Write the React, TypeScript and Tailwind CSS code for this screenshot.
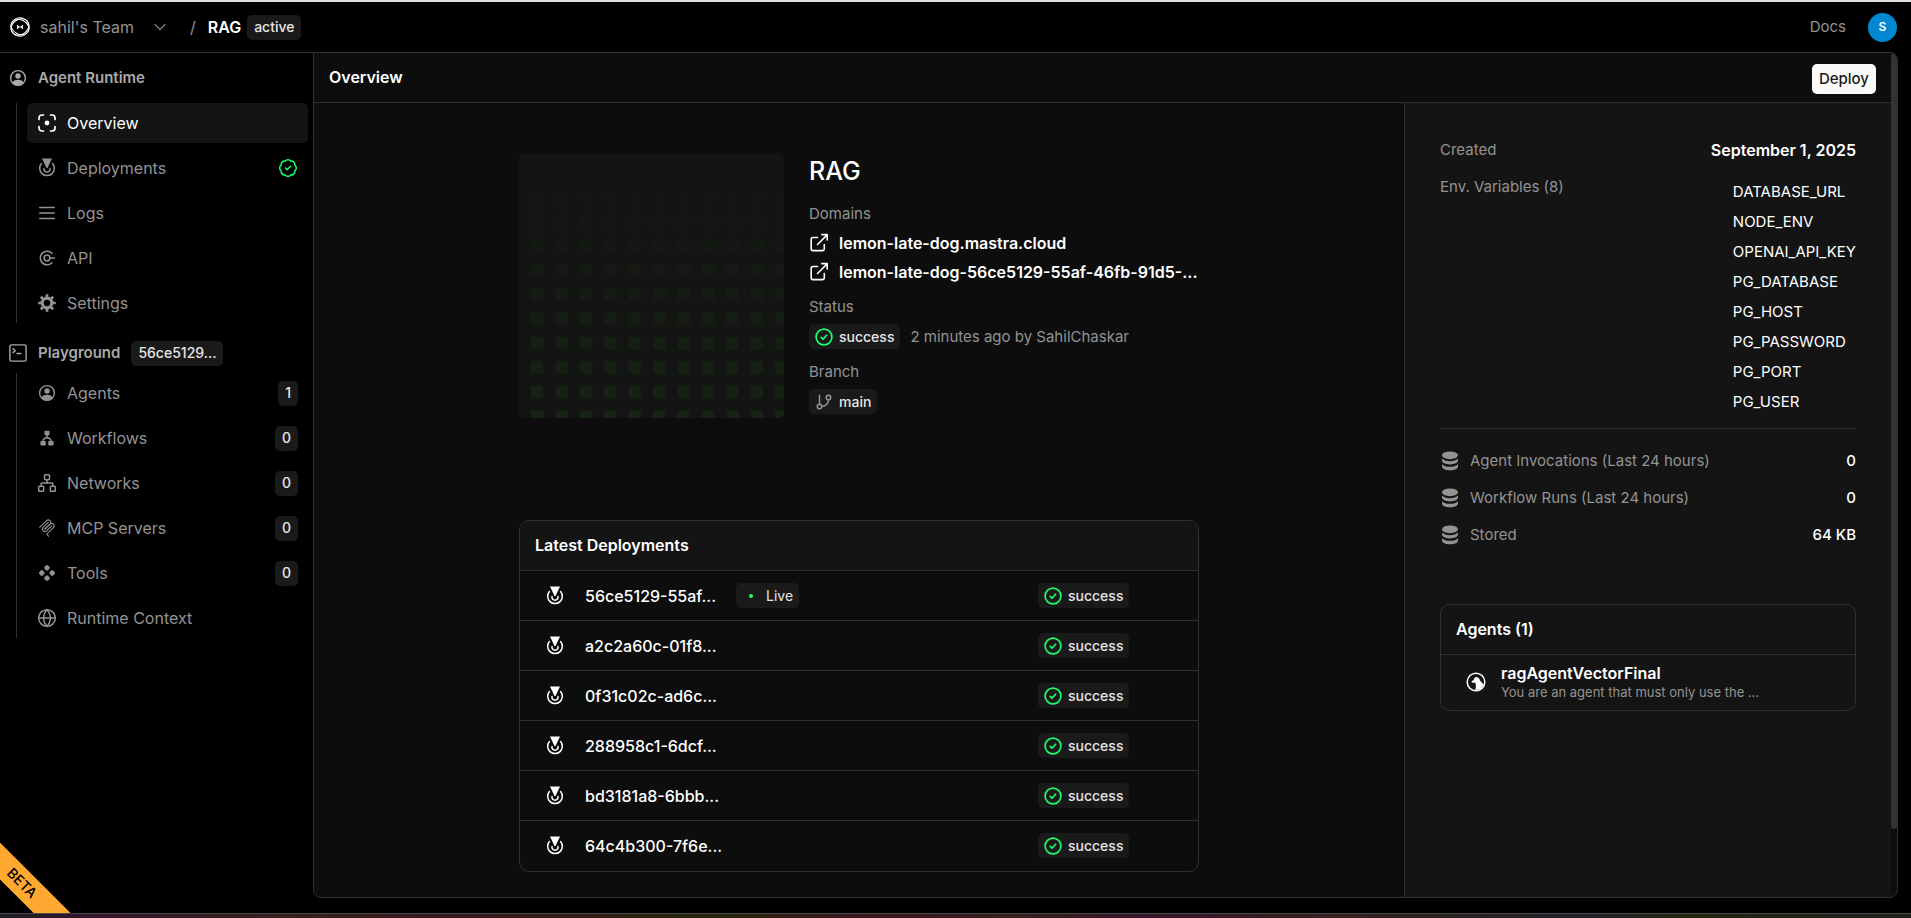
import type { ReactNode } from "react";
import { ChevronDown, Globe, Network, GitBranch, BadgeCheck } from "lucide-react";

type IconProps = { className?: string };

function LogoIcon() {
  return (
    <svg viewBox="0 0 22 22" className="size-[22px] text-white" fill="none" stroke="currentColor" strokeWidth="1">
      <circle cx="11" cy="11" r="9.3" />
      <ellipse cx="11" cy="11" rx="9.4" ry="7.2" transform="rotate(30 11 11)" />
      <ellipse cx="11" cy="11" rx="9.4" ry="7.6" transform="rotate(-35 11 11)" />
      <path d="M8 9.200 9.800 11 8 12.800M14 9.200 12.200 11l1.800 1.800M8 11h6" strokeWidth="1.1" />
    </svg>
  );
}

function AgentIcon({ className }: IconProps) {
  return (
    <svg viewBox="0 0 18 18" className={className} fill="currentColor">
      <circle cx="9" cy="9" r="7.4" fill="none" stroke="currentColor" strokeWidth="1.4" />
      <circle cx="9" cy="7" r="2.7" />
      <path d="M3.2 14C4 11.8 6 10.8 9 10.8s5 1 5.800 3.200C13.500 15.600 11.300 16.600 9 16.600S4.500 15.600 3.200 14Z" />
    </svg>
  );
}

function OverviewIcon({ className }: IconProps) {
  return (
    <svg viewBox="0 0 18 18" className={className} fill="none" stroke="currentColor" strokeWidth="1.7" strokeLinecap="round">
      <path d="M1 5.500V4a3 3 0 0 1 3-3h1.500M12.500 1H14a3 3 0 0 1 3 3v1.500M17 12.500V14a3 3 0 0 1-3 3h-1.500M5.500 17H4a3 3 0 0 1-3-3v-1.500" />
      <circle cx="9" cy="9" r="2.400" fill="currentColor" stroke="none" />
    </svg>
  );
}

function DeploymentIcon({ className }: IconProps) {
  return (
    <svg viewBox="0 0 18 20" className={className} fill="none" stroke="currentColor" strokeWidth="1.500" strokeLinecap="round">
      <path d="M4 0.600h10L9.500 10h-1Z" fill="currentColor" stroke="none" />
      <path d="M3.400 5.600a7.300 7.300 0 1 0 11.200 0" />
      <path d="M6 10.400a3.100 3.100 0 1 0 6 0" />
    </svg>
  );
}

function LogsIcon({ className }: IconProps) {
  return (
    <svg viewBox="0 0 18 18" className={className} fill="none" stroke="currentColor" strokeWidth="1.600" strokeLinecap="round">
      <path d="M1.800 3.500h14.400M1.800 9h14.400M1.800 14.500h14.400" />
    </svg>
  );
}

function ApiIcon({ className }: IconProps) {
  return (
    <svg viewBox="0 0 18 18" className={className} fill="none" stroke="currentColor" strokeWidth="1.500" strokeLinecap="round">
      <path d="M14 4.300a6.800 6.800 0 1 0 0 9.400" />
      <circle cx="9" cy="9" r="2.900" />
      <path d="M12 9h4.500" />
    </svg>
  );
}

function SettingsIcon({ className }: IconProps) {
  return (
    <svg viewBox="0 0 18 18" className={className} fill="none" stroke="currentColor">
      <circle cx="9" cy="9" r="4.800" strokeWidth="3.200" />
      <path d="M9 0.200v3M9 14.800v3M0.200 9h3M14.800 9h3M2.800 2.800l2 2M13.200 13.200l2 2M2.800 15.200l2-2M13.200 4.800l2-2" strokeWidth="2.700" />
    </svg>
  );
}

function TerminalIcon({ className }: IconProps) {
  return (
    <svg viewBox="0 0 18 18" className={className} fill="none" stroke="currentColor" strokeWidth="1.400" strokeLinecap="round" strokeLinejoin="round">
      <rect x="0.900" y="0.900" width="16.200" height="16.200" rx="1.600" />
      <path d="M4 4.800l2.300 1.900L4 8.600M8 9.500h3.800" />
    </svg>
  );
}

function WorkflowIcon({ className }: IconProps) {
  return (
    <svg viewBox="0 0 18 18" className={className} fill="currentColor">
      <rect x="6.500" y="1.800" width="5" height="4.400" rx="0.800" />
      <rect x="2.400" y="12" width="5.400" height="4.400" rx="0.800" />
      <rect x="10.200" y="12" width="5.400" height="4.400" rx="0.800" />
      <path d="M9 6v3M5 12.500c0-2.500 1-3 4-4 3 1 4 1.500 4 4" fill="none" stroke="currentColor" strokeWidth="1.500" />
    </svg>
  );
}

function McpIcon({ className }: IconProps) {
  return (
    <svg viewBox="0 0 180 180" className={className} fill="none" stroke="currentColor" strokeWidth="11" strokeLinecap="round">
      <path d="M18 84.850 85.880 16.970a24 24 0 0 1 33.940 33.940L68.560 102.180" />
      <path d="M69.270 101.470l50.550-50.560a24 24 0 0 1 33.940 0l.36.350a24 24 0 0 1 0 33.940l-61.400 61.400a8 8 0 0 0 0 11.310l12.610 12.610" />
      <path d="M102.850 33.940 52.650 84.150a24 24 0 0 0 33.940 33.940l50.200-50.210" />
    </svg>
  );
}

function ToolsIcon({ className }: IconProps) {
  return (
    <svg viewBox="0 0 18 18" className={className} fill="currentColor">
      <rect x="6.600" y="1.400" width="4.800" height="4.800" rx="1.400" transform="rotate(45 9 3.800)" />
      <rect x="6.600" y="11.800" width="4.800" height="4.800" rx="1.400" transform="rotate(45 9 14.200)" />
      <rect x="1.400" y="6.600" width="4.800" height="4.800" rx="1.400" transform="rotate(45 3.800 9)" />
      <rect x="11.800" y="6.600" width="4.800" height="4.800" rx="1.400" transform="rotate(45 14.200 9)" />
    </svg>
  );
}

function DatabaseIcon() {
  return (
    <svg viewBox="0 0 20 20" className="size-5" fill="currentColor">
      <ellipse cx="10" cy="4.300" rx="8" ry="3.900" />
      <path d="M2 7.600c1.400 1.700 4.400 2.600 8 2.600s6.600-.9 8-2.600v2c0 2.200-3.600 3.800-8 3.800S2 11.800 2 9.600Z" />
      <path d="M2 13.200c1.400 1.700 4.400 2.600 8 2.600s6.600-.9 8-2.600v2.200c0 2.200-3.600 3.900-8 3.900s-8-1.700-8-3.900Z" />
    </svg>
  );
}

function ExternalLinkIcon() {
  return (
    <svg viewBox="0 0 20 20" className="size-5 shrink-0" fill="none" stroke="currentColor" strokeWidth="1.600" strokeLinecap="round" strokeLinejoin="round">
      <path d="M8.500 4.500H4A1.800 1.800 0 0 0 2.200 6.300v9.500A1.800 1.800 0 0 0 4 17.600h9.500a1.800 1.800 0 0 0 1.800-1.800v-4.300" />
      <path d="M8.500 11.500 18 2M12.800 1.600h5.400V7" />
    </svg>
  );
}

function CheckCircleIcon() {
  return (
    <svg viewBox="0 0 18 18" className="size-[18px]" fill="none" stroke="currentColor" strokeWidth="1.700" strokeLinecap="round" strokeLinejoin="round">
      <circle cx="9" cy="9" r="7.900" />
      <path d="M6.200 9.400 8 11.200l3.600-4" />
    </svg>
  );
}

function OpenAiIcon() {
  return (
    <svg viewBox="0 0 20 20" className="size-5" fill="none" stroke="currentColor" strokeWidth="1.500">
      <circle cx="10" cy="10" r="8.800" />
      <path d="M5.300 9.900C6 8.800 6.800 8.500 7.700 8c.3-2 1.600-3.200 3.400-2.800 1.800.4 2.700 1.700 2.900 3.400l3.600 3.800-3 4.800-5.400.9c.9-3 .8-5.800.2-7.400-1.400 0-2.800.1-4.100-.8Z" fill="currentColor" stroke="none" />
    </svg>
  );
}

function Badge({ icon, children }: { icon?: ReactNode; children: ReactNode }) {
  return (
    <span
      className={
        icon
          ? "inline-flex h-[25px] shrink-0 items-center gap-1.5 rounded-[5px] bg-[#1a1a1a] px-1.5 text-sm font-medium text-[#e6e6e6]"
          : "inline-flex h-[25px] shrink-0 items-center rounded-[5px] bg-[#1a1a1a] px-[7px] text-sm font-medium text-[#e6e6e6]"
      }
    >
      {icon}
      {children}
    </span>
  );
}

function SuccessBadge() {
  return (
    <Badge icon={<span className="text-[#1aff6c]"><CheckCircleIcon /></span>}>success</Badge>
  );
}

type NavItem = { label: string; icon: ReactNode; active?: boolean; trailing?: ReactNode };

const iconBox = "size-[18px]";

const runtimeItems: NavItem[] = [
  { label: "Overview", icon: <OverviewIcon className={iconBox} />, active: true },
  { label: "Deployments", icon: <DeploymentIcon className="h-5 w-[18px]" />, trailing: <BadgeCheck className="size-5 text-[#1aff6c]" strokeWidth={1.8} /> },
  { label: "Logs", icon: <LogsIcon className={iconBox} /> },
  { label: "API", icon: <ApiIcon className={iconBox} /> },
  { label: "Settings", icon: <SettingsIcon className={iconBox} /> },
];

const playgroundItems: NavItem[] = [
  { label: "Agents", icon: <AgentIcon className={iconBox} />, trailing: <Badge>1</Badge> },
  { label: "Workflows", icon: <WorkflowIcon className={iconBox} />, trailing: <Badge>0</Badge> },
  { label: "Networks", icon: <Network className="size-5" strokeWidth={1.8} />, trailing: <Badge>0</Badge> },
  { label: "MCP Servers", icon: <McpIcon className={iconBox} />, trailing: <Badge>0</Badge> },
  { label: "Tools", icon: <ToolsIcon className={iconBox} />, trailing: <Badge>0</Badge> },
  { label: "Runtime Context", icon: <Globe className="size-5" strokeWidth={1.8} /> },
];

function NavList({ items }: { items: NavItem[] }) {
  return (
    <ul className="ml-4 flex flex-col gap-[5px] border-l border-[#303030] pl-2.5">
      {items.map((item) => (
        <li key={item.label}>
          <a
            href="#"
            className={
              item.active
                ? "flex h-10 items-center gap-2.5 rounded-[5px] bg-[#141414] px-2.5 text-base text-white"
                : "flex h-10 items-center gap-2.5 rounded-[5px] px-2.5 text-base text-[#939393]"
            }
          >
            <span className="flex size-5 items-center justify-center">{item.icon}</span>
            <span className="flex-1">{item.label}</span>
            {item.trailing}
          </a>
        </li>
      ))}
    </ul>
  );
}

const deployments = [
  "56ce5129-55af...",
  "a2c2a60c-01f8...",
  "0f31c02c-ad6c...",
  "288958c1-6dcf...",
  "bd3181a8-6bbb...",
  "64c4b300-7f6e...",
];

const envVars = ["DATABASE_URL", "NODE_ENV", "OPENAI_API_KEY", "PG_DATABASE", "PG_HOST", "PG_PASSWORD", "PG_PORT", "PG_USER"];

const stats = [
  { label: "Agent Invocations (Last 24 hours)", value: "0" },
  { label: "Workflow Runs (Last 24 hours)", value: "0" },
  { label: "Stored", value: "64 KB" },
];

function DotPattern() {
  return (
    <div className="size-[265px] shrink-0 overflow-hidden rounded-[5px] bg-[#141414]">
      <svg className="size-full" aria-hidden="true">
        <defs>
          <pattern id="dots" x="12" y="13" width="24.420" height="24.420" patternUnits="userSpaceOnUse">
            <rect width="12.200" height="12.200" fill="#162414" />
          </pattern>
          <linearGradient id="fade" x1="0" y1="0" x2="0" y2="1">
            <stop offset="0.050" stopColor="#fff" stopOpacity="0" />
            <stop offset="1" stopColor="#fff" />
          </linearGradient>
          <mask id="fadeMask">
            <rect width="100%" height="100%" fill="url(#fade)" />
          </mask>
        </defs>
        <rect width="100%" height="100%" fill="url(#dots)" mask="url(#fadeMask)" />
      </svg>
    </div>
  );
}

function ProjectSummary() {
  return (
    <section className="flex gap-[25px]">
      <DotPattern />
      <div className="min-w-0 flex-1 text-[15px] leading-5 text-[#939393]">
        <h1 className="pt-1 text-[25px] leading-7 font-medium text-white">RAG</h1>
        <h2 className="mt-[19px]">Domains</h2>
        <ul className="mt-1 text-base font-semibold text-white">
          {["lemon-late-dog.mastra.cloud", "lemon-late-dog-56ce5129-55af-46fb-91d5-..."].map((domain) => (
            <li key={domain}>
              <a href="#" className="flex h-[29px] items-center gap-2.5">
                <ExternalLinkIcon />
                <span className="whitespace-nowrap">{domain}</span>
              </a>
            </li>
          ))}
        </ul>
        <h2 className="mt-[11px]">Status</h2>
        <p className="mt-[7px] flex items-center gap-2.5">
          <SuccessBadge />
          2 minutes ago by SahilChaskar
        </p>
        <h2 className="mt-[13px]">Branch</h2>
        <p className="mt-[7px] flex">
          <Badge icon={<GitBranch className="size-[18px] text-[#939393]" strokeWidth={2} />}>main</Badge>
        </p>
      </div>
    </section>
  );
}

function LatestDeployments() {
  return (
    <section className="mt-[102px] overflow-hidden rounded-[10px] border border-[#303030]">
      <h2 className="flex h-[49px] items-center bg-[#141414] px-[15px] pb-0.5 text-base font-semibold text-white">Latest Deployments</h2>
      <table className="w-full text-base font-medium text-white">
        <tbody>
          {deployments.map((id, index) => (
            <tr key={id} className="h-[50px] border-t border-[#303030]">
              <td className="w-[65px] pl-[26px]">
                <DeploymentIcon className="h-5 w-[18px]" />
              </td>
              <td>
                <span className="flex items-center gap-5">
                  {id}
                  {index === 0 && (
                    <Badge icon={<span className="flex w-[18px] justify-center"><span className="size-1 rounded-full bg-[#1aff6c]" /></span>}>
                      <span className="font-normal">Live</span>
                    </Badge>
                  )}
                </span>
              </td>
              <td className="w-[160px]">
                <span className="flex">
                  <SuccessBadge />
                </span>
              </td>
            </tr>
          ))}
        </tbody>
      </table>
    </section>
  );
}

function DetailsPanel() {
  return (
    <aside className="w-[487px] shrink-0 border-l border-[#303030] bg-[#141414] px-[35px] pt-[35px] text-[15px] leading-5 text-[#939393]">
      <dl>
        <div className="flex h-6 items-center justify-between">
          <dt>Created</dt>
          <dd className="text-base font-semibold text-white">September 1, 2025</dd>
        </div>
        <div className="mt-[15px] flex justify-between">
          <dt>Env. Variables (8)</dt>
          <dd>
            <ul className="text-white">
              {envVars.map((name) => (
                <li key={name} className="flex h-[30px] items-center">{name}</li>
              ))}
            </ul>
          </dd>
        </div>
      </dl>
      <dl className="mt-[11px] flex flex-col gap-[17px] border-t border-[#303030] pt-[22px]">
        {stats.map((stat) => (
          <div key={stat.label} className="flex items-center justify-between">
            <dt className="flex items-center gap-2.5">
              <DatabaseIcon />
              {stat.label}
            </dt>
            <dd className="font-medium text-white">{stat.value}</dd>
          </div>
        ))}
      </dl>
      <section className="mt-[59px] rounded-[10px] border border-[#303030]">
        <h2 className="flex h-[49px] items-center px-[15px] pb-0.5 text-base font-semibold text-white">Agents (1)</h2>
        <a href="#" className="flex h-[56px] items-center gap-[15px] border-t border-[#303030] pb-0.5 pl-[25px] text-white">
          <OpenAiIcon />
          <span>
            <span className="block text-base leading-5 font-semibold">ragAgentVectorFinal</span>
            <span className="block text-[13px] leading-[18px] text-[#939393]">You are an agent that must only use the ...</span>
          </span>
        </a>
      </section>
    </aside>
  );
}

export default function App() {
  return (
    <div className="relative flex h-screen flex-col overflow-hidden border-t-2 border-[#dfe1e5] bg-black font-['Inter',sans-serif] text-base text-[#939393]">
      <header className="flex h-[50px] shrink-0 items-center justify-between pr-3.5 pl-[9px]">
        <div className="flex items-center">
          <button type="button" className="flex items-center">
            <LogoIcon />
            <span className="ml-[9px]">sahil&apos;s Team</span>
            <ChevronDown className="ml-4 size-5 text-[#707070]" strokeWidth={2} />
          </button>
          <span className="mr-3 ml-5">/</span>
          <span className="mr-1.5 font-semibold text-white">RAG</span>
          <Badge>active</Badge>
        </div>
        <div className="flex items-center gap-[22px] text-[15px]">
          <a href="#">Docs</a>
          <button type="button" className="size-[29px] rounded-full bg-[#0288d1] text-xs font-semibold text-white">S</button>
        </div>
      </header>

      <div className="flex min-h-0 flex-1">
        <nav className="w-[313px] shrink-0 border-t border-[#303030] pr-[5px]">
          <h2 className="flex h-[50px] items-center gap-[11px] pl-[9px] text-[15px] font-semibold text-[#a9a9a9]">
            <AgentIcon className={iconBox} />
            Agent Runtime
          </h2>
          <NavList items={runtimeItems} />
          <h2 className="flex h-[50px] items-center gap-[11px] pt-2.5 pl-[9px] text-[15px] font-semibold text-[#a9a9a9]">
            <TerminalIcon className={iconBox} />
            Playground
            <Badge>56ce5129...</Badge>
          </h2>
          <NavList items={playgroundItems} />
        </nav>

        <main className="mr-[13px] mb-[15px] flex min-w-0 flex-1 overflow-hidden rounded-tr-lg rounded-b-lg border border-[#303030] bg-[#0d0d0d]">
          <div className="flex min-w-0 flex-1 flex-col">
            <div className="flex h-[50px] shrink-0 items-center justify-between border-b border-[#303030] px-[15px]">
              <h1 className="pb-0.5 text-base font-semibold text-white">Overview</h1>
              <button type="button" className="mb-2 flex h-[30px] items-center self-end rounded-[5px] bg-[#fafafa] px-[7px] text-[15px] font-medium text-[#1a1a1a]">Deploy</button>
            </div>
            <div className="flex min-h-0 flex-1">
              <div className="flex min-w-0 flex-1 justify-center pt-[50px]">
                <div className="w-full max-w-[680px]">
                  <ProjectSummary />
                  <LatestDeployments />
                </div>
              </div>
              <DetailsPanel />
            </div>
          </div>
          <div className="w-1.5 shrink-0">
            <div className="h-[92%] rounded-full bg-[#333333]" />
          </div>
        </main>
      </div>

      <div className="h-[5px] shrink-0 border-t border-[#4a4a4a] bg-[linear-gradient(to_right,#1e1e22,#34172c_5%,#33201a_15%,#38191a_25%,#27240f_37%,#3c161c_46%,#33201a_53%,#38152c_60%,#33201a_70%,#20222a_83%,#232511_88%,#20201a)]" />
      <div className="pointer-events-none absolute bottom-[5px] left-0 size-[70px] overflow-hidden">
        <div className="absolute top-[27px] -left-[38px] flex h-[26px] w-[120px] rotate-45 items-center justify-center rounded-[5px] bg-[#ffa931] text-sm font-medium text-black">BETA</div>
      </div>
    </div>
  );
}
